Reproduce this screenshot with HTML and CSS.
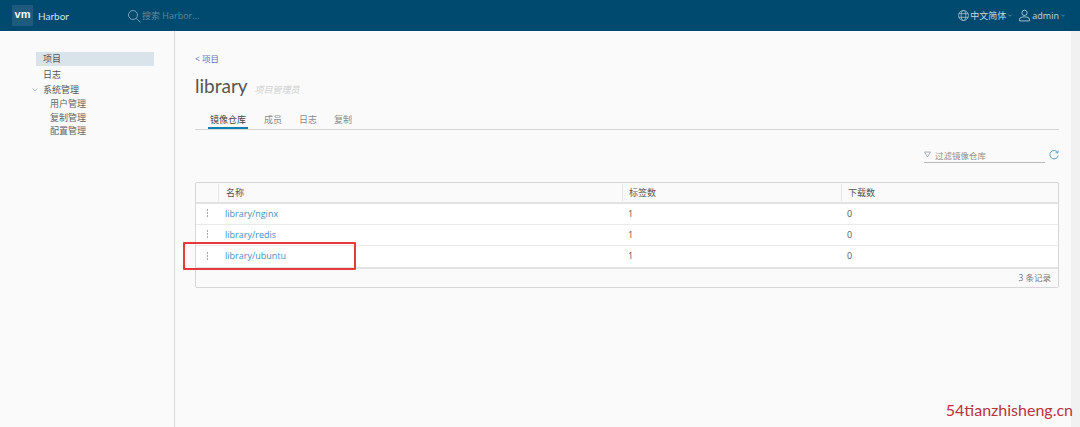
FILE: index.html
```html
<html>

<head>
<meta charset="utf-8">
<link rel="stylesheet" href="styles.css">
</head>

<body>
	<div class="nav">
		<div class="brand">
			<span class="logo">vm</span>
			<span class="brand-name">Harbor</span>
		</div>
		<div class="search">
			<svg width="14" height="14" viewBox="0 0 14 14" fill="none" stroke="#7f9fb4" stroke-width="1">
				<circle cx="6" cy="6" r="4.5"></circle>
				<path d="M9.3 9.3L13.5 13.5"></path>
			</svg>
			<span>搜索 Harbor...</span>
		</div>
		<div class="nav-right">
			<svg width="11" height="11" viewBox="0 0 12 12" fill="none" stroke="#b5c9d6" stroke-width="0.8">
				<circle cx="6" cy="6" r="5.4"></circle>
				<ellipse cx="6" cy="6" rx="2.5" ry="5.4"></ellipse>
				<path d="M0.8 4H11.2M0.8 8H11.2"></path>
			</svg>
			<span class="lang">中文简体</span>
			<svg class="caret" width="4" height="3" viewBox="0 0 5 3" fill="none" stroke="#8fb0c4" stroke-width="0.7"><path d="M0.3 0.3L2.5 2.5L4.7 0.3"></path></svg>
			<svg class="user-icon" width="11" height="13" viewBox="0 0 12 13" fill="none" stroke="#c5d5df" stroke-width="0.9">
				<circle cx="6" cy="3.6" r="2.9"></circle>
				<path d="M0.6 12.4V10.4C0.6 9 3 8 6 8C9 8 11.4 9 11.4 10.4V12.4Z"></path>
			</svg>
			<span class="user">admin</span>
			<svg class="caret" width="4" height="3" viewBox="0 0 5 3" fill="none" stroke="#8fb0c4" stroke-width="0.7"><path d="M0.3 0.3L2.5 2.5L4.7 0.3"></path></svg>
		</div>
	</div>
	<div class="page">
		<div class="side">
			<div class="side-item active">项目</div>
			<div class="side-item log">日志</div>
			<div class="side-item group">
				<svg class="side-caret" width="6" height="4" viewBox="0 0 6 4" fill="none" stroke="#a9b1b6" stroke-width="0.8"><path d="M0.4 0.4L3 3L5.6 0.4"></path></svg>
				系统管理
			</div>
			<div class="side-sub">用户管理</div>
			<div class="side-sub">复制管理</div>
			<div class="side-sub">配置管理</div>
		</div>
		<div class="main">
			<a class="back" href="#">&lt; 项目</a>
			<div class="title">
				<h1>library</h1>
				<span class="role">项目管理员</span>
			</div>
			<div class="tabs">
				<a class="tab on" href="#">镜像仓库</a>
				<a class="tab" href="#">成员</a>
				<a class="tab" href="#">日志</a>
				<a class="tab" href="#">复制</a>
			</div>
			<div class="tools">
				<div class="filter">
					<svg width="7" height="7" viewBox="0 0 7 7" fill="none" stroke="#8a9298" stroke-width="0.7"><path d="M0.5 1H6.5L3.5 6Z"></path></svg>
					<span>过滤镜像仓库</span>
				</div>
				<svg class="refresh" width="10" height="10" viewBox="0 0 10 10" fill="none" stroke="#5a9fc4" stroke-width="1">
					<path d="M8.6 2.4A4.2 4.2 0 1 0 9.2 5.6"></path>
					<path d="M9 0.4V2.8H6.6"></path>
				</svg>
			</div>
			<div class="grid">
				<div class="row head">
					<div class="cell-menu"></div>
					<div class="cell-name">名称</div>
					<div class="cell-tags">标签数</div>
					<div class="cell-pulls">下载数</div>
				</div>
				<div class="row">
					<div class="cell-menu"><span class="dots"></span></div>
					<div class="cell-name"><a href="#">library/nginx</a></div>
					<div class="cell-tags">1</div>
					<div class="cell-pulls">0</div>
				</div>
				<div class="row">
					<div class="cell-menu"><span class="dots"></span></div>
					<div class="cell-name"><a href="#">library/redis</a></div>
					<div class="cell-tags">1</div>
					<div class="cell-pulls">0</div>
				</div>
				<div class="row">
					<div class="cell-menu"><span class="dots"></span></div>
					<div class="cell-name"><a href="#">library/ubuntu</a></div>
					<div class="cell-tags">1</div>
					<div class="cell-pulls">0</div>
				</div>
				<div class="grid-foot">3 条记录</div>
			</div>
		</div>
		<div class="scrollbar"></div>
	</div>
	<div class="mark-box"></div>
	<div class="watermark">54tianzhisheng.cn</div>
</body>

</html>
```

FILE: styles.css
```css
body {
	margin: 0;
	height: 427px;
	overflow: hidden;
	position: relative;
	font-family: "Open Sans", "Noto Sans CJK SC", sans-serif;
	background-color: #fafafa;
	color: #565656;
}

a {
	text-decoration: none;
}

.nav {
	display: flex;
	align-items: center;
	height: 31px;
	background-color: #004a70;
	color: #fff;
	box-sizing: border-box;
}

.brand {
	display: flex;
	align-items: center;
	margin-left: 12px;
	width: 115px;
}

.logo {
	width: 21px;
	height: 21px;
	line-height: 19px;
	text-align: center;
	background-color: #1f5a7c;
	font-family: "Liberation Sans", sans-serif;
	font-size: 11px;
	font-weight: bold;
	color: #f2f6f8;
}

.brand-name {
	margin-left: 5px;
	font-family: "Lato", sans-serif;
	font-size: 10px;
	color: #d5e1e8;
}

.search {
	display: flex;
	align-items: center;
	gap: 1px;
	font-size: 9px;
	color: #5f88a0;
}

.nav-right {
	display: flex;
	align-items: center;
	margin-left: auto;
	margin-right: 15px;
	font-size: 9px;
	color: #c8d7e0;
}

.lang {
	font-size: 9px;
	margin-left: 1px;
}

.caret {
	margin-left: 2px;
}

.user-icon {
	margin-left: 7px;
	margin-right: 2px;
}

.page {
	display: flex;
	height: 396px;
}

.side {
	width: 175px;
	flex: none;
	box-sizing: border-box;
	padding: 21px 20px 0 36px;
	border-right: 1px solid #d7d7d7;
	font-size: 9px;
	background-color: #fafafa;
}

.side-item {
	height: 14px;
	line-height: 14px;
	padding-left: 7px;
}

.side-item.active {
	background-color: #d9e4ea;
	color: #555;
}

.side-item.log {
	margin-top: 2px;
}

.side-item.group {
	margin-top: 1px;
	position: relative;
}

.side-caret {
	position: absolute;
	left: -4px;
	top: 5px;
}

.side-sub {
	height: 13.5px;
	line-height: 13.5px;
	padding-left: 14px;
	color: #666;
}

.main {
	flex: 1;
	min-width: 0;
	padding: 21px 12px 0 20px;
}

.back {
	display: block;
	height: 13px;
	line-height: 13px;
	font-size: 8.5px;
	color: #6f6fc0;
}

.title {
	display: flex;
	align-items: baseline;
	margin-top: 8px;
	height: 27px;
}

.title h1 {
	margin: 0;
	font-family: "Lato", sans-serif;
	font-size: 19px;
	font-weight: 400;
	letter-spacing: 0;
	line-height: 25px;
	color: #555;
}

.role {
	margin-left: 7px;
	font-size: 9px;
	font-style: italic;
	color: #d0d0d0;
}

.tabs {
	display: flex;
	margin-top: 6px;
	height: 24px;
	box-sizing: border-box;
	border-bottom: 1px solid #d7d7d7;
	padding-left: 15px;
	gap: 17px;
}

.tab {
	font-size: 9px;
	line-height: 27px;
	color: #8a8a8a;
	height: 23px;
	box-sizing: border-box;
}

.tab.on {
	color: #444;
	margin-left: -2px;
	margin-right: -1px;
	padding: 0 2px;
	border-bottom: 2px solid #0f7fb5;
}

.tools {
	display: flex;
	justify-content: flex-end;
	align-items: center;
	height: 16px;
	margin-top: 17px;
	padding-right: 0;
}

.filter {
	display: flex;
	align-items: center;
	gap: 4px;
	box-sizing: border-box;
	width: 121px;
	height: 16px;
	border-bottom: 1px solid #bbb;
	font-size: 8.5px;
	color: #8f8f8f;
}

.refresh {
	margin-left: 4px;
}

.grid {
	margin-top: 19px;
	border: 1px solid #d7d7d7;
	border-radius: 2px;
	background-color: #fafafa;
}

.row {
	display: flex;
	align-items: center;
	height: 21px;
	padding-bottom: 2px;
	font-size: 9px;
	background-color: #fff;
	border-bottom: 1px solid #eaeaea;
	box-sizing: border-box;
}

.row.head {
	height: 21px;
	padding-bottom: 0;
	background-color: #fafafa;
	border-bottom: 2px solid #e2e2e2;
	color: #555;
}

.row:nth-child(4) {
	border-bottom: 2px solid #e2e2e2;
	height: 23px;
}

.cell-menu {
	width: 22px;
	flex: none;
	text-align: center;
}

.cell-name {
	width: 404px;
	flex: none;
	box-sizing: border-box;
	padding-left: 7px;
}

.cell-tags {
	width: 219px;
	flex: none;
	box-sizing: border-box;
	padding-left: 6px;
}

.cell-pulls {
	flex: 1;
	padding-left: 6px;
}

.head .cell-name,
.head .cell-tags,
.head .cell-pulls {
	border-left: 1px solid #e4e4e4;
	line-height: 17px;
}

.cell-name a {
	color: #3f8fbc;
	font-size: 9px;
}

.dots {
	display: inline-block;
	width: 1px;
	height: 2px;
	background-color: #a8a8a8;
	box-shadow: 0 3px 0 #a8a8a8, 0 -3px 0 #a8a8a8;
	vertical-align: middle;
}

.grid-foot {
	height: 18px;
	line-height: 18px;
	text-align: right;
	padding-right: 7px;
	font-size: 8.5px;
	color: #777;
}

.scrollbar {
	width: 9px;
	flex: none;
	background-color: #f1f1f1;
}

.mark-box {
	position: absolute;
	left: 183px;
	top: 242px;
	width: 169px;
	height: 24px;
	border: 2px solid #e33b3b;
	border-radius: 1px;
}

.watermark {
	position: absolute;
	right: 7px;
	top: 400px;
	font-family: "Lato", sans-serif;
	font-size: 16px;
	color: #b9323c;
}
```
